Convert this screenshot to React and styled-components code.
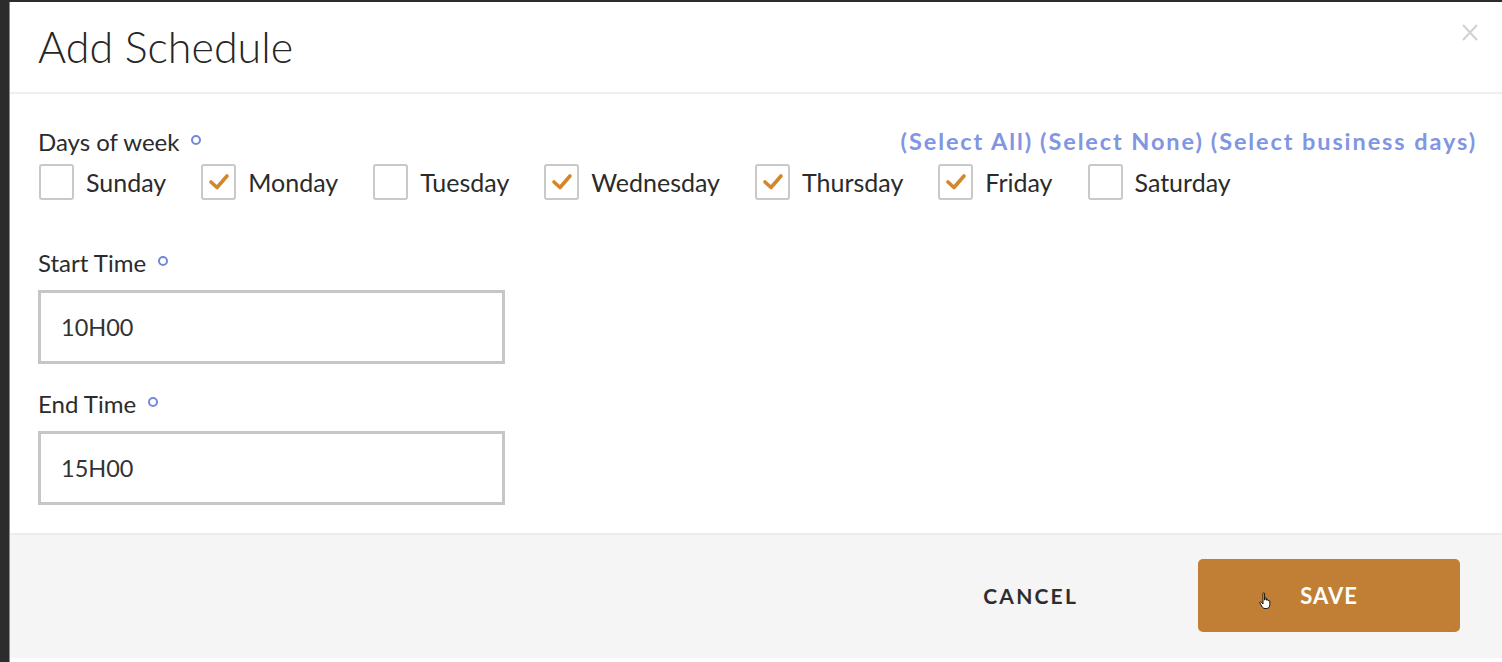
import styled, { createGlobalStyle } from "styled-components";

const GlobalStyle = createGlobalStyle`
  html, body {
    margin: 0;
    padding: 0;
    background: #2c2c2c;
  }
  * {
    box-sizing: border-box;
  }
`;

const Page = styled.div`
  height: 662px;
  padding: 2px 0 0 9px;
  background: #2c2c2c;
  font-family: Lato, "Liberation Sans", sans-serif;
  color: #2b2b2b;
`;

const Modal = styled.div`
  height: 100%;
  display: flex;
  flex-direction: column;
  background: #fff;
  border-left: 1px solid #8a8a8a;
`;

const Header = styled.div`
  height: 93px;
  display: flex;
  align-items: center;
  justify-content: space-between;
  padding: 0 24px 2px 28px;
  border-bottom: 2px solid #efefef;
`;

const Title = styled.h1`
  margin: 0;
  font-size: 43px;
  font-weight: 300;
  color: #262626;
`;

const Close = styled.svg`
  align-self: flex-start;
  margin-top: 22px;
`;

const Body = styled.div`
  padding: 35px 25px 28px 28px;
  display: flex;
  flex-direction: column;
`;

const TopRow = styled.div`
  display: flex;
  align-items: center;
  justify-content: space-between;
  height: 24px;
`;

const Label = styled.div`
  display: flex;
  align-items: center;
  gap: 12px;
  height: 24px;
  font-size: 24px;
  margin-top: ${(p) => p.$top || 0}px;
`;

const Dot = styled.span`
  width: 10px;
  height: 10px;
  border-radius: 50%;
  border: 2.5px solid #7189dc;
  margin-top: -3px;
`;

const Links = styled.div`
  display: flex;
  gap: 7px;
  font-size: 23.5px;
  font-weight: 700;
  letter-spacing: 1.9px;
  color: #8196e2;
`;

const Days = styled.div`
  display: flex;
  align-items: center;
  height: 36px;
  margin-top: 11px;
  padding-left: 1px;
`;

const Day = styled.label`
  display: flex;
  align-items: center;
  gap: 12px;
  margin-right: 35px;
  font-size: 25px;
  color: #2b2b2b;
`;

const Box = styled.span`
  width: 35px;
  height: 36px;
  border: 2px solid #c9c9c9;
  border-radius: 3px;
  display: flex;
  align-items: center;
  justify-content: center;
  background: #fff;
`;

const Input = styled.div`
  width: 467px;
  height: 74px;
  margin-top: 16px;
  border: 3px solid #c6c6c6;
  display: flex;
  align-items: center;
  padding-left: 20px;
  font-size: 23.5px;
  color: #333;
`;

const Footer = styled.div`
  margin-top: auto;
  height: 126px;
  margin-bottom: 4px;
  border-top: 2px solid #ececec;
  background: #f5f5f5;
  display: flex;
  align-items: center;
  justify-content: flex-end;
  padding: 0 42px 2px 0;
  gap: 120px;
`;

const CancelButton = styled.button`
  border: none;
  background: none;
  padding: 0;
  font-family: inherit;
  font-size: 21px;
  font-weight: 700;
  letter-spacing: 2.2px;
  color: #2e2e2e;
`;

const SaveButton = styled.button`
  position: relative;
  width: 262px;
  height: 73px;
  border: none;
  border-radius: 5px;
  background: #c17f35;
  color: #fff;
  font-family: inherit;
  font-size: 22px;
  font-weight: 700;
  letter-spacing: 1px;
`;

const Cursor = styled.svg`
  position: absolute;
  left: 61px;
  top: 33px;
`;

const Check = () => (
  <svg width="22" height="18" viewBox="0 0 22 18">
    <path
      d="M3 9 L9 14.5 L19 3"
      fill="none"
      stroke="#d4862c"
      strokeWidth="3.6"
      strokeLinecap="round"
      strokeLinejoin="round"
    />
  </svg>
);

const days = [
  ["Sunday", false],
  ["Monday", true],
  ["Tuesday", false],
  ["Wednesday", true],
  ["Thursday", true],
  ["Friday", true],
  ["Saturday", false],
];

export default function App() {
  return (
    <Page>
      <GlobalStyle />
      <Modal>
        <Header>
          <Title>Add Schedule</Title>
          <Close width="16" height="17" viewBox="0 0 16 17">
            <path d="M1 1 L15 16 M15 1 L1 16" stroke="#d2d2d2" strokeWidth="2.2" />
          </Close>
        </Header>
        <Body>
          <TopRow>
            <Label>
              Days of week <Dot />
            </Label>
            <Links>
              <span>(Select All)</span>
              <span>(Select None)</span>
              <span>(Select business days)</span>
            </Links>
          </TopRow>
          <Days>
            {days.map(([name, checked]) => (
              <Day key={name}>
                <Box>{checked && <Check />}</Box>
                {name}
              </Day>
            ))}
          </Days>
          <Label $top={50}>
            Start Time <Dot />
          </Label>
          <Input>10H00</Input>
          <Label $top={27}>
            End Time <Dot />
          </Label>
          <Input>15H00</Input>
        </Body>
        <Footer>
          <CancelButton>CANCEL</CancelButton>
          <SaveButton>
            <Cursor width="14" height="18" viewBox="0 0 14 18">
              <path
                d="M4 1.5 C4 0.7 5.6 0.7 5.6 1.5 V8 H6 V6.3 C6 5.6 7.6 5.6 7.6 6.3 V8.2 C7.6 7.5 9.2 7.5 9.2 8.2 V9 C9.2 8.4 10.8 8.4 10.8 9.1 V12.5 C10.8 15 9.6 16.5 7.5 16.5 H6 C4.6 16.5 3.8 15.8 3 14.6 L0.9 11 C0.5 10.2 1.7 9.5 2.3 10.2 L4 12 Z"
                fill="#fff"
                stroke="#111"
                strokeWidth="1"
                strokeLinejoin="round"
              />
            </Cursor>
            SAVE
          </SaveButton>
        </Footer>
      </Modal>
    </Page>
  );
}
